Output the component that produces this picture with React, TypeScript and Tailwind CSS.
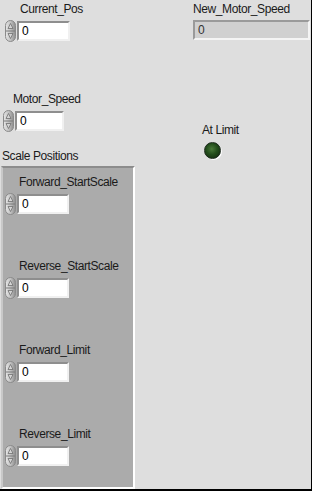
const CLUSTER_ITEMS = ['Forward_StartScale', 'Reverse_StartScale', 'Forward_Limit', 'Reverse_Limit']

function Spinner() {
  return (
    <svg width="11" height="22" viewBox="0 0 11 22" className="shrink-0">
      <defs>
        <linearGradient id="spin" x1="0" x2="1" y1="0" y2="0">
          <stop offset="0" stopColor="#e8e8e8" />
          <stop offset="0.55" stopColor="#bdbdbd" />
          <stop offset="1" stopColor="#8c8c8c" />
        </linearGradient>
      </defs>
      <rect x="0.5" y="0.5" width="10" height="21" rx="5" fill="url(#spin)" stroke="#8a8a8a" />
      <line x1="1" y1="11" x2="10" y2="11" stroke="#7a7a7a" />
      <path d="M3 8.5 L5.5 3.5 L8 8.5 Z" fill="#d4d4d4" stroke="#707070" strokeWidth="0.8" />
      <path d="M3 13.5 L5.5 18.5 L8 13.5 Z" fill="#d4d4d4" stroke="#707070" strokeWidth="0.8" />
    </svg>
  )
}

function NumControl({ label, boxW = 'w-[53px]', indent = 'pl-[15px]' }: { label: string; boxW?: string; indent?: string }) {
  return (
    <div className="flex flex-col">
      <span className={`${indent} text-[12px] leading-[14px] tracking-[-0.4px] text-[#1a1a1a]`}>{label}</span>
      <div className="mt-[4px] flex items-center gap-[1px]">
        <Spinner />
        <div className={`${boxW} h-[20px] border-2 border-t-[#8e8e8e] border-l-[#8e8e8e] border-b-[#f0f0f0] border-r-[#f0f0f0] bg-white pl-[3px] text-[12px] leading-[16px] text-black`}>
          0
        </div>
      </div>
    </div>
  )
}

export default function App() {
  return (
    <div
      className="relative h-[491px] w-[312px] overflow-hidden border-r border-b-2 border-black bg-[#dedede]"
      style={{ fontFamily: '"Liberation Sans", Arial, sans-serif' }}
    >
      {/* front panel controls, free-placed like LabVIEW */}
      <div className="absolute left-[5px] top-[2px]">
        <NumControl label="Current_Pos" />
      </div>

      <div className="absolute left-[193px] top-[2px] flex flex-col">
        <span className="text-[12px] leading-[14px] tracking-[-0.4px] text-[#1a1a1a]">New_Motor_Speed</span>
        <div className="mt-[4px] h-[20px] w-[117px] border-2 border-t-[#9a9a9a] border-l-[#9a9a9a] border-b-[#f4f4f4] border-r-[#f4f4f4] bg-[#d0d0d0] pl-[3px] text-[12px] leading-[16px] text-[#333]">
          0
        </div>
      </div>

      <div className="absolute left-[3px] top-[92px]">
        <NumControl label="Motor_Speed" boxW="w-[49px]" indent="pl-[10px]" />
      </div>

      <div className="absolute left-[202px] top-[123px] flex flex-col items-start">
        <span className="text-[12px] leading-[14px] tracking-[-0.4px] text-[#1a1a1a]">At Limit</span>
        <div className="ml-[2px] mt-[5px] h-[17px] w-[17px] rounded-full border border-[#1c2a1c] bg-[radial-gradient(circle_at_45%_40%,#4a7a3a_0%,#234d1c_45%,#0f240c_100%)] shadow-[1px_1px_0_#ffffff]" />
      </div>

      <div className="absolute left-[1px] top-[149px] flex flex-col">
        <span className="pl-[1px] text-[12px] leading-[14px] tracking-[-0.4px] text-[#1a1a1a]">Scale Positions</span>
        <div className="mt-[3px] h-[323px] w-[134px] border-2 border-t-[#8c8c8c] border-l-[#c8c8c8] border-b-white border-r-white bg-[#ababab]">
          <div className="flex flex-col gap-[44px] pl-[2px] pt-[7px]">
            {CLUSTER_ITEMS.map((name) => (
              <NumControl key={name} label={name} boxW="w-[52px]" indent="pl-[14px]" />
            ))}
          </div>
        </div>
      </div>
    </div>
  )
}
